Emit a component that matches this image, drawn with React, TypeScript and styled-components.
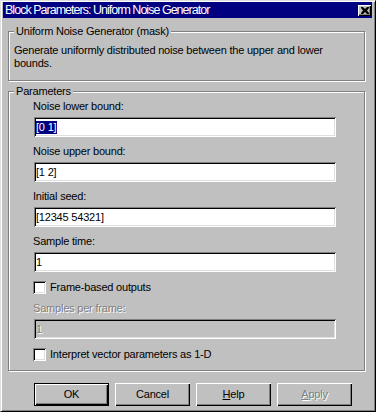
import React from 'react';
import styled, { createGlobalStyle } from 'styled-components';

const Global = createGlobalStyle`
  html, body { margin: 0; padding: 0; background: #c0c0c0; }
  * { box-sizing: border-box; }
`;

const Window = styled.div`
  width: 376px;
  height: 412px;
  background: #c0c0c0;
  border: 1px solid;
  border-color: #dfdfdf #000 #000 #dfdfdf;
  box-shadow: inset 1px 1px #fff, inset -1px -1px #808080;
  padding: 1px 3px 2px 2px;
  display: flex;
  flex-direction: column;
  font-family: "Liberation Sans", Arial, sans-serif;
  font-size: 11px;
  letter-spacing: -0.2px;
  color: #000;
`;

const TitleBar = styled.div`
  height: 16px;
  background: #000080;
  color: #fff;
  display: flex;
  align-items: center;
  justify-content: space-between;
  padding: 0 1px 0 2px;
`;

const TitleText = styled.span`
  font-size: 12.5px;
  letter-spacing: -0.98px;
  line-height: 16px;
  white-space: nowrap;
`;

const CloseButton = styled.div`
  width: 13px;
  height: 11px;
  background: #c0c0c0;
  box-shadow: inset 1px 1px #fff, inset -1px -1px #000, inset -2px -2px #808080;
  display: flex;
  align-items: center;
  justify-content: center;
`;

const Body = styled.div`
  display: flex;
  flex-direction: column;
  padding: 0 7px 0 5px;
`;

const Group = styled.fieldset<{ $top: number; $padLeft: number; $padTop: number; $padBottom: number }>`
  margin: ${p => p.$top}px 0 0 0;
  padding: ${p => p.$padTop}px 5px ${p => p.$padBottom}px ${p => p.$padLeft}px;
  min-width: 0;
  border: 1px solid #808080;
  box-shadow: inset 1px 1px #fff, 1px 1px #fff;
`;

const Legend = styled.legend<{ $shift: number }>`
  padding: 0 2px;
  margin-left: ${p => p.$shift}px;
  line-height: 13px;
  font-size: 11px;
  background: #c0c0c0;
`;

const Description = styled.div`
  line-height: 13px;
`;

const Column = styled.div`
  display: flex;
  flex-direction: column;
  gap: 8px;
`;

const FieldGroup = styled.div`
  display: flex;
  flex-direction: column;
  gap: 4px;
`;

const Label = styled.div<{ $disabled?: boolean }>`
  line-height: 13px;
  color: ${p => (p.$disabled ? '#808080' : '#000')};
  text-shadow: ${p => (p.$disabled ? '1px 1px #fff' : 'none')};
`;

const TextField = styled.div<{ $disabled?: boolean }>`
  margin-left: 1px;
  width: 302px;
  height: 20px;
  background: ${p => (p.$disabled ? '#c0c0c0' : '#fff')};
  color: ${p => (p.$disabled ? '#808080' : '#000')};
  text-shadow: ${p => (p.$disabled ? '1px 1px #fff' : 'none')};
  box-shadow: inset 1px 1px #808080, inset -1px -1px #fff, inset 2px 2px #000, inset -2px -2px #dfdfdf;
  padding: 0 2px 0 2px;
  display: flex;
  align-items: center;
  line-height: 13px;
  white-space: pre;
`;

const Selected = styled.span`
  background: #000080;
  color: #fff;
  padding: 0 1px 0 0;
`;

const CheckRow = styled.div`
  margin-top: 1px;
  display: flex;
  align-items: center;
  gap: 4px;
  height: 13px;
  line-height: 13px;
`;

const CheckBox = styled.div`
  width: 13px;
  height: 13px;
  background: #fff;
  box-shadow: inset 1px 1px #808080, inset -1px -1px #fff, inset 2px 2px #000, inset -2px -2px #dfdfdf;
`;

const ButtonRow = styled.div`
  display: flex;
  gap: 6px;
  margin-top: 12px;
  padding-left: 26px;
`;

const Button = styled.div<{ $default?: boolean; $disabled?: boolean }>`
  width: 75px;
  height: 23px;
  display: flex;
  align-items: center;
  justify-content: center;
  line-height: 13px;
  background: #c0c0c0;
  border: ${p => (p.$default ? '1px solid #000' : 'none')};
  box-shadow: inset 1px 1px #fff, inset -1px -1px #000, inset -2px -2px #808080;
  color: ${p => (p.$disabled ? '#808080' : '#000')};
  text-shadow: ${p => (p.$disabled ? '1px 1px #fff' : 'none')};
`;

const CloseGlyph = () => (
  <svg width="8" height="7" viewBox="0 0 8 7">
    <path d="M0 0h2l2 2 2-2h2v1L6 3.5 8 6v1H6L4 5 2 7H0V6l2-2.5L0 1z" fill="#000" />
  </svg>
);

export default function App() {
  return (
    <>
      <Global />
      <Window>
        <TitleBar>
          <TitleText>Block Parameters: Uniform Noise Generator</TitleText>
          <CloseButton>
            <CloseGlyph />
          </CloseButton>
        </TitleBar>
        <Body>
          <Group $top={7} $padLeft={5} $padTop={6} $padBottom={10}>
            <Legend $shift={0}>Uniform Noise Generator (mask)</Legend>
            <Description>
              Generate uniformly distributed noise between the upper and lower
              <br />
              bounds.
            </Description>
          </Group>
          <Group $top={4} $padLeft={24} $padTop={2} $padBottom={9}>
            <Legend $shift={-19}>Parameters</Legend>
            <Column>
              <FieldGroup>
                <Label>Noise lower bound:</Label>
                <TextField>
                  <Selected>[0 1]</Selected>
                </TextField>
              </FieldGroup>
              <FieldGroup>
                <Label>Noise upper bound:</Label>
                <TextField>[1 2]</TextField>
              </FieldGroup>
              <FieldGroup>
                <Label>Initial seed:</Label>
                <TextField>[12345 54321]</TextField>
              </FieldGroup>
              <FieldGroup>
                <Label>Sample time:</Label>
                <TextField>1</TextField>
              </FieldGroup>
              <CheckRow>
                <CheckBox />
                <span>Frame-based outputs</span>
              </CheckRow>
              <FieldGroup>
                <Label $disabled>Samples per frame:</Label>
                <TextField $disabled>1</TextField>
              </FieldGroup>
              <CheckRow>
                <CheckBox />
                <span>Interpret vector parameters as 1-D</span>
              </CheckRow>
            </Column>
          </Group>
          <ButtonRow>
            <Button $default>OK</Button>
            <Button>Cancel</Button>
            <Button>
              <span>
                <u>H</u>elp
              </span>
            </Button>
            <Button $disabled>
              <span>
                <u>A</u>pply
              </span>
            </Button>
          </ButtonRow>
        </Body>
      </Window>
    </>
  );
}
